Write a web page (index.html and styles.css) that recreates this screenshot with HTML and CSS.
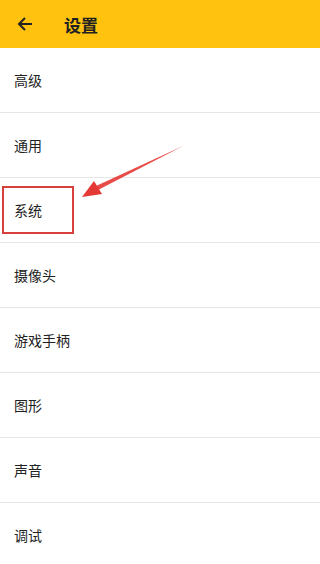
FILE: index.html
```html
<!DOCTYPE html>
<html lang="zh">
<head>
  <meta charset="UTF-8">
  <meta name="viewport" content="width=device-width, initial-scale=1.0">
  <title>设置</title>
  <link rel="stylesheet" href="styles.css">
</head>
<body>

  <div class="ecran">
    <div class="entete">
      <span class="btn-retour">
        <svg width="18" height="18" viewBox="0 0 18 18"><path d="M16 9H3M9 3L3 9l6 6" fill="none" stroke="#222" stroke-width="2"/></svg>
      </span>
      <span class="titre">设置</span>
    </div>

    <div class="liste">
      <div class="ligne">高级</div>
      <div class="ligne">通用</div>
      <div class="ligne"><span class="cadre">系统</span></div>
      <div class="ligne">摄像头</div>
      <div class="ligne">游戏手柄</div>
      <div class="ligne">图形</div>
      <div class="ligne">声音</div>
      <div class="ligne">调试</div>
    </div>

    <svg class="fleche" width="320" height="564" viewBox="0 0 320 564">
      <polygon points="183,146 96,186 98,190" fill="#e53935" opacity="0.9"/>
      <polygon points="82,197 94,181 102,194" fill="#e53935"/>
    </svg>
  </div>

</body>
</html>
```

FILE: styles.css
```css
body {
  margin: 0;
  font-family: "Noto Sans CJK SC", "Noto Sans", sans-serif;
  background: #fff;
}

.ecran {
  position: relative;
  width: 320px;
  height: 564px;
  overflow: hidden;
}

.entete {
  height: 48px;
  background: #ffc20e;
  display: flex;
  align-items: center;
}

.btn-retour {
  width: 64px;
  padding-left: 16px;
  box-sizing: border-box;
  display: flex;
  align-items: center;
}

.titre {
  font-size: 17px;
  font-weight: bold;
  color: #222;
}

.ligne {
  height: 64px;
  border-bottom: 1px solid #e6e6e6;
  display: flex;
  align-items: center;
  padding-left: 14px;
  font-size: 14px;
  color: #222;
}

.cadre {
  margin-left: -12px;
  width: 72px;
  height: 48px;
  border: 2px solid #d9403a;
  display: flex;
  align-items: center;
  padding-left: 10px;
  box-sizing: border-box;
}

.fleche {
  position: absolute;
  top: 0;
  left: 0;
  pointer-events: none;
}
```
